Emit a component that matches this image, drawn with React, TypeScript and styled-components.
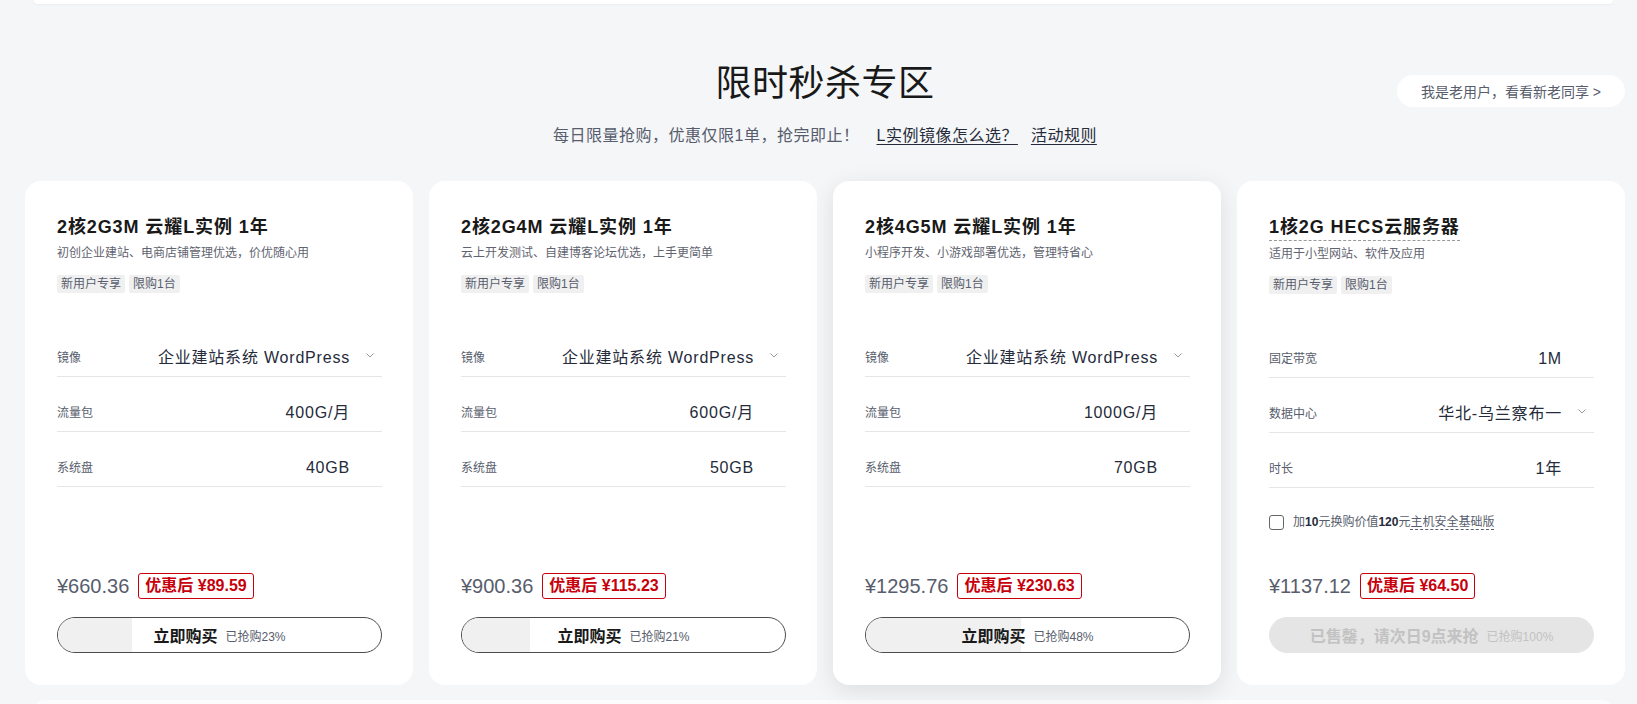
import React from "react"
import styled, { createGlobalStyle } from "styled-components"

const GlobalStyle = createGlobalStyle`
  body {
    margin: 0;
    background: #f5f6f8;
    font-family: "Liberation Sans", "Noto Sans CJK SC", sans-serif;
    color: #252b3a;
  }
`

const Page = styled.div`
  width: 1637px;
  height: 704px;
  overflow: hidden;
`

const PrevSection = styled.div`
  height: 4px;
  margin: 0 24px 0 34px;
  background: #fff;
  border-radius: 0 0 10px 10px;
  box-shadow: 0 1px 3px rgba(0, 0, 0, 0.04);
`

const NextSection = styled.div`
  height: 40px;
  margin: 15px 24px 0 34px;
  background: #fcfcfd;
  border-radius: 10px 10px 0 0;
`

const Section = styled.section`
  margin: 0 12px 0 25px;
`

const Header = styled.header`
  display: grid;
  grid-template-columns: 1fr auto 1fr;
  padding-top: 58px;
`

const HeaderText = styled.div`
  grid-column: 2;
  text-align: center;
`

const Title = styled.h2`
  margin: 0;
  font-size: 36px;
  line-height: 44px;
  font-weight: 400;
  color: #191919;
  letter-spacing: 0.5px;
`

const Subtitle = styled.p`
  margin: 18px 0 0;
  font-size: 16px;
  line-height: 24px;
  color: #575d6c;
  letter-spacing: 0.5px;
`

const SubLink = styled.a<{ $gap: number }>`
  margin-left: ${(p) => p.$gap}px;
  color: #252b3a;
  text-decoration: underline;
  text-underline-offset: 3px;
  cursor: pointer;
`

const OldUserPill = styled.button`
  grid-column: 3;
  justify-self: end;
  align-self: start;
  margin-top: 13px;
  height: 32px;
  padding: 0 24px;
  border: none;
  border-radius: 16px;
  background: #fff;
  font-family: inherit;
  font-size: 14px;
  color: #575d6c;
  cursor: pointer;
`

const CardGrid = styled.div`
  display: grid;
  grid-template-columns: repeat(4, 388px);
  gap: 16px;
  margin-top: 33px;
`

const Card = styled.div<{ $featured?: boolean }>`
  box-sizing: border-box;
  height: 504px;
  padding: 33px 31px 32px 32px;
  display: flex;
  flex-direction: column;
  background: #fff;
  border-radius: 16px;
  box-shadow: ${(p) => (p.$featured ? "0 6px 24px rgba(0, 0, 0, 0.1)" : "none")};
`

const CardTitle = styled.h3<{ $dashed?: boolean }>`
  align-self: flex-start;
  margin: 0;
  font-size: 18px;
  line-height: 26px;
  font-weight: 700;
  color: #191919;
  letter-spacing: 0.9px;
  border-bottom: ${(p) => (p.$dashed ? "1px dashed #999" : "none")};
`

const CardDesc = styled.p`
  margin: 4px 0 0;
  font-size: 12px;
  line-height: 18px;
  color: #5f6470;
`

const TagList = styled.div`
  display: flex;
  gap: 4px;
  margin-top: 13px;
`

const Tag = styled.span`
  height: 18px;
  padding: 0 4px;
  font-size: 12px;
  line-height: 18px;
  color: #575d6c;
  background: #f0f0f0;
  border-radius: 2px;
`

const SpecList = styled.div`
  margin-top: 29px;
`

const SpecRow = styled.div`
  box-sizing: border-box;
  height: 55px;
  padding-bottom: 8px;
  display: flex;
  align-items: flex-end;
  border-bottom: 1px solid #e6e6e6;
`

const SpecLabel = styled.span`
  font-size: 12px;
  line-height: 20px;
  color: #575d6c;
`

const SpecValue = styled.span`
  flex: 1;
  text-align: right;
  font-size: 16px;
  line-height: 20px;
  color: #252b3a;
  letter-spacing: 0.8px;
`

const ChevronSlot = styled.span`
  box-sizing: border-box;
  width: 32px;
  height: 20px;
  padding-left: 8px;
  display: flex;
  align-items: center;
  justify-content: center;
  padding-bottom: 6px;
`

const AddOn = styled.label`
  display: flex;
  align-items: center;
  gap: 9px;
  margin-top: 25px;
  font-size: 12px;
  line-height: 18px;
  color: #575d6c;
`

const CheckBox = styled.span`
  box-sizing: border-box;
  width: 15px;
  height: 15px;
  border: 1px solid #666;
  border-radius: 3px;
  background: #fff;
`

const Strong = styled.b`
  color: #252b3a;
`

const Dashed = styled.span`
  border-bottom: 1px dashed #575d6c;
`

const PriceRow = styled.div`
  margin-top: auto;
  display: flex;
  align-items: center;
  gap: 9px;
  height: 26px;
`

const OriginalPrice = styled.span`
  font-size: 20px;
  line-height: 26px;
  color: #575d6c;
`

const DealPrice = styled.span`
  box-sizing: border-box;
  height: 26px;
  padding: 0 6px;
  border: 1px solid #c7000b;
  border-radius: 3px;
  font-size: 16px;
  line-height: 24px;
  font-weight: 700;
  color: #c7000b;
`

const BuyButton = styled.button<{ $soldOut?: boolean }>`
  position: relative;
  margin-top: 18px;
  height: 36px;
  width: 100%;
  padding: 0;
  overflow: hidden;
  border: 1px solid ${(p) => (p.$soldOut ? "#e5e5e5" : "#4d4d4d")};
  border-radius: 18px;
  background: ${(p) => (p.$soldOut ? "#e5e5e5" : "#fff")};
  font-family: inherit;
  cursor: ${(p) => (p.$soldOut ? "not-allowed" : "pointer")};
`

const Progress = styled.span`
  position: absolute;
  left: 0;
  top: 0;
  bottom: 0;
  background: #f0f0f0;
`

const ButtonLabel = styled.span<{ $soldOut?: boolean }>`
  position: relative;
  display: flex;
  align-items: center;
  justify-content: center;
  gap: 8px;
  height: 100%;
  b {
    font-size: 16px;
    color: ${(p) => (p.$soldOut ? "#c2c2c2" : "#191919")};
  }
  small {
    font-size: 12px;
    color: ${(p) => (p.$soldOut ? "#c2c2c2" : "#575d6c")};
  }
`

const Chevron = () => (
  <svg width="8" height="5" viewBox="0 0 8 5" fill="none">
    <path d="M0.5 0.5L4 4L7.5 0.5" stroke="#9a9a9a" strokeWidth="1" />
  </svg>
)

type Spec = { label: string; value: string; select?: boolean }

type Offer = {
  title: string
  desc: string
  specs: Spec[]
  price: string
  deal: string
  sold: number
  featured?: boolean
  hecs?: boolean
}

const offers: Offer[] = [
  {
    title: "2核2G3M 云耀L实例 1年",
    desc: "初创企业建站、电商店铺管理优选，价优随心用",
    specs: [
      { label: "镜像", value: "企业建站系统 WordPress", select: true },
      { label: "流量包", value: "400G/月" },
      { label: "系统盘", value: "40GB" },
    ],
    price: "¥660.36",
    deal: "¥89.59",
    sold: 23,
  },
  {
    title: "2核2G4M 云耀L实例 1年",
    desc: "云上开发测试、自建博客论坛优选，上手更简单",
    specs: [
      { label: "镜像", value: "企业建站系统 WordPress", select: true },
      { label: "流量包", value: "600G/月" },
      { label: "系统盘", value: "50GB" },
    ],
    price: "¥900.36",
    deal: "¥115.23",
    sold: 21,
  },
  {
    title: "2核4G5M 云耀L实例 1年",
    desc: "小程序开发、小游戏部署优选，管理特省心",
    specs: [
      { label: "镜像", value: "企业建站系统 WordPress", select: true },
      { label: "流量包", value: "1000G/月" },
      { label: "系统盘", value: "70GB" },
    ],
    price: "¥1295.76",
    deal: "¥230.63",
    sold: 48,
    featured: true,
  },
  {
    title: "1核2G HECS云服务器",
    desc: "适用于小型网站、软件及应用",
    specs: [
      { label: "固定带宽", value: "1M" },
      { label: "数据中心", value: "华北-乌兰察布一", select: true },
      { label: "时长", value: "1年" },
    ],
    price: "¥1137.12",
    deal: "¥64.50",
    sold: 100,
    hecs: true,
  },
]

const OfferCard = ({ offer }: { offer: Offer }) => {
  const soldOut = offer.sold >= 100
  return (
    <Card $featured={offer.featured}>
      <CardTitle $dashed={offer.hecs}>{offer.title}</CardTitle>
      <CardDesc>{offer.desc}</CardDesc>
      <TagList>
        <Tag>新用户专享</Tag>
        <Tag>限购1台</Tag>
      </TagList>
      <SpecList>
        {offer.specs.map((s) => (
          <SpecRow key={s.label}>
            <SpecLabel>{s.label}</SpecLabel>
            <SpecValue>{s.value}</SpecValue>
            <ChevronSlot>{s.select && <Chevron />}</ChevronSlot>
          </SpecRow>
        ))}
      </SpecList>
      {offer.hecs && (
        <AddOn>
          <CheckBox />
          <span>
            加<Strong>10</Strong>元换购价值<Strong>120</Strong>元<Dashed>主机安全基础版</Dashed>
          </span>
        </AddOn>
      )}
      <PriceRow>
        <OriginalPrice>{offer.price}</OriginalPrice>
        <DealPrice>优惠后 {offer.deal}</DealPrice>
      </PriceRow>
      <BuyButton $soldOut={soldOut}>
        {!soldOut && <Progress style={{ width: `${offer.sold}%` }} />}
        <ButtonLabel $soldOut={soldOut}>
          <b>{soldOut ? "已售罄，请次日9点来抢" : "立即购买"}</b>
          <small>已抢购{offer.sold}%</small>
        </ButtonLabel>
      </BuyButton>
    </Card>
  )
}

export default function App() {
  return (
    <Page>
      <GlobalStyle />
      <PrevSection />
      <Section>
        <Header>
          <HeaderText>
            <Title>限时秒杀专区</Title>
            <Subtitle>
              每日限量抢购，优惠仅限1单，抢完即止！
              <SubLink $gap={17}>L实例镜像怎么选？</SubLink>
              <SubLink $gap={13}>活动规则</SubLink>
            </Subtitle>
          </HeaderText>
          <OldUserPill>我是老用户，看看新老同享 &gt;</OldUserPill>
        </Header>
        <CardGrid>
          {offers.map((o) => (
            <OfferCard key={o.title} offer={o} />
          ))}
        </CardGrid>
      </Section>
      <NextSection />
    </Page>
  )
}
